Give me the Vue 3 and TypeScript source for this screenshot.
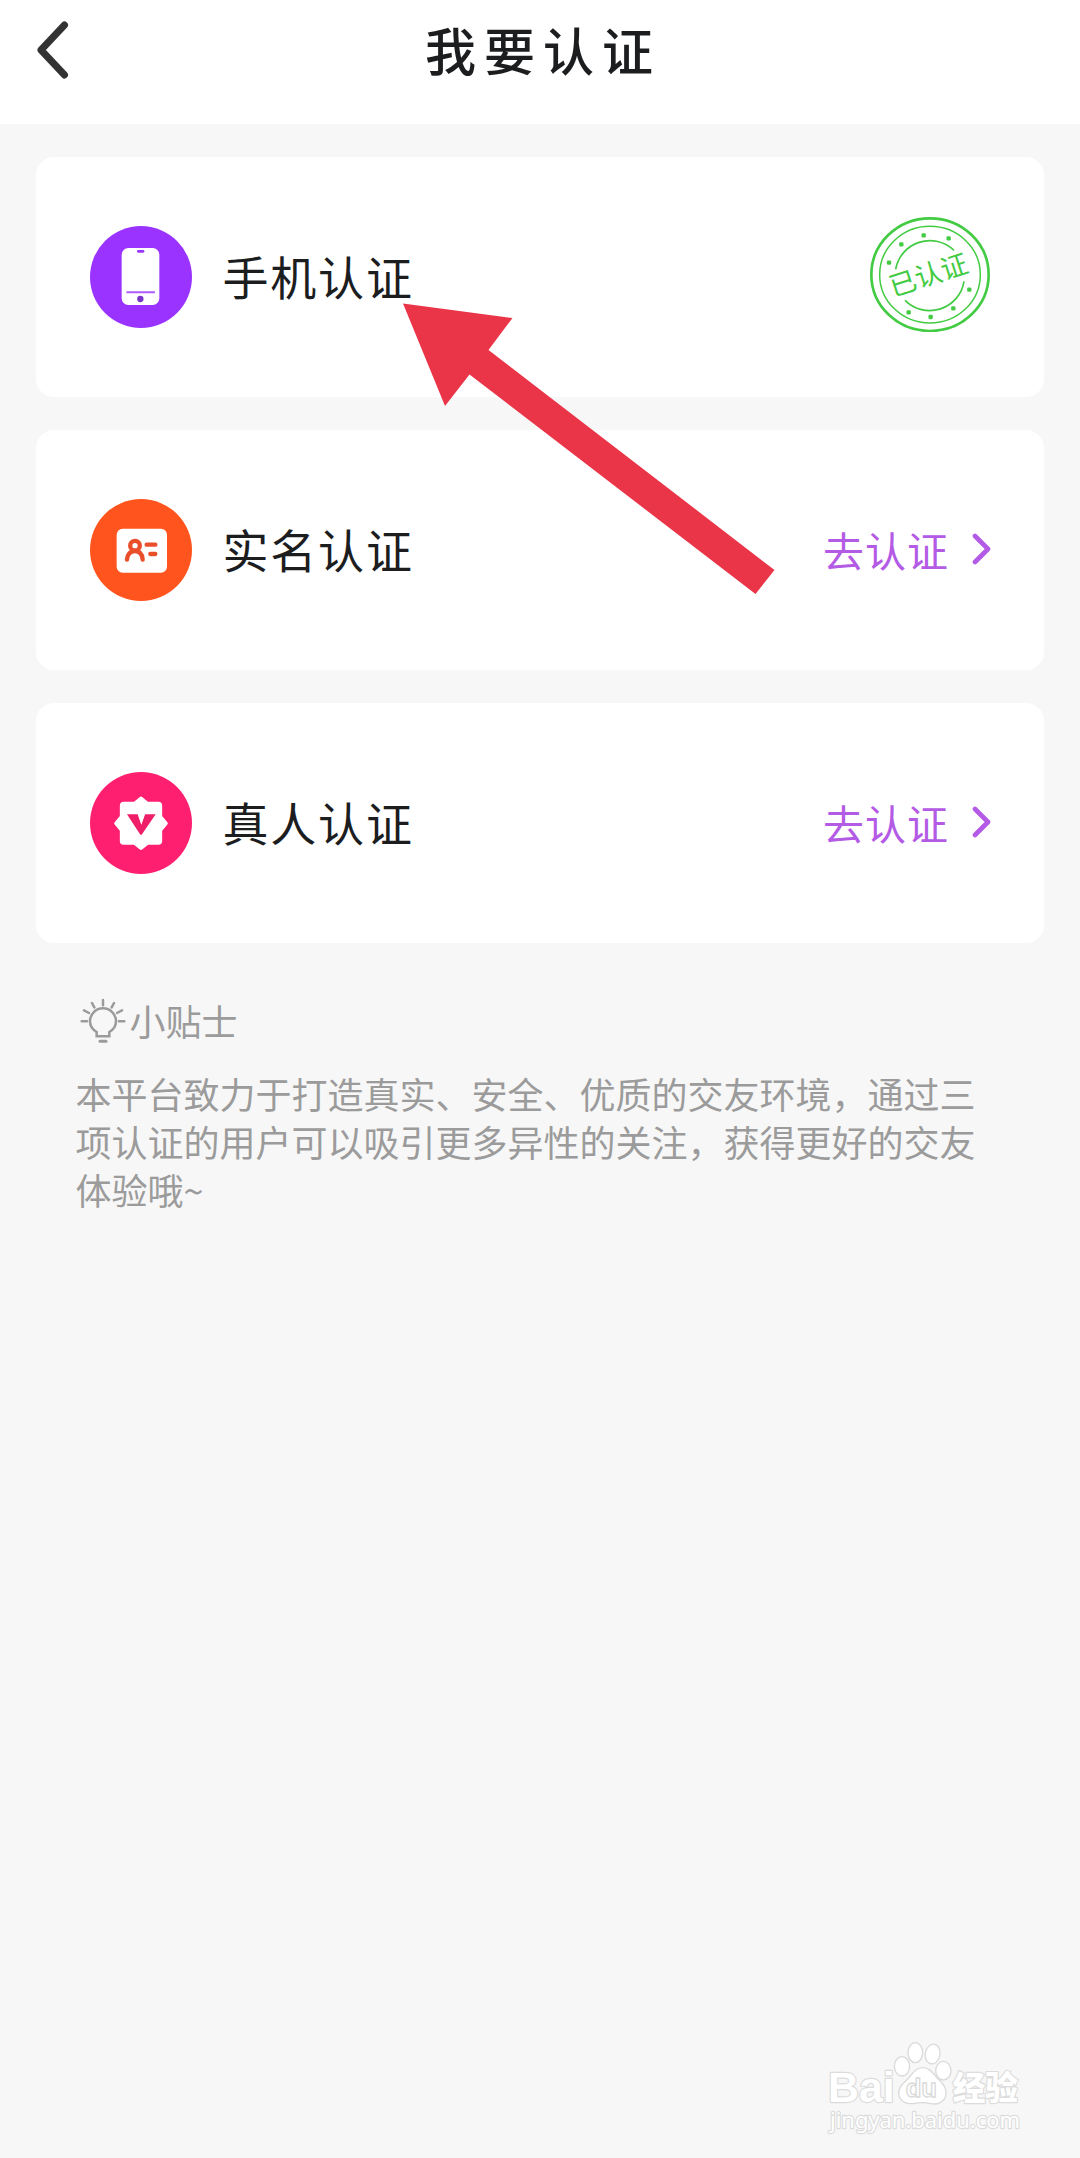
<script setup lang="ts">
interface Item {
  key: 'phone' | 'idcard' | 'person'
  label: string
  color: string
  verified: boolean
}

const items: Item[] = [
  { key: 'phone', label: '手机认证', color: '#9a33ff', verified: true },
  { key: 'idcard', label: '实名认证', color: '#ff541d', verified: false },
  { key: 'person', label: '真人认证', color: '#ff1f70', verified: false },
]

const stampDots = [
  [117, 187], [154, 132], [221, 105], [296, 114],
  [358, 268], [310, 324], [242, 350], [176, 336],
]
</script>

<template>
  <div class="page">
    <header class="bar">
      <svg class="back" width="34" height="60" viewBox="0 0 34 60">
        <path d="M27.5 5 L4 30 L27.5 55" />
      </svg>
      <h1 class="title">我要认证</h1>
    </header>

    <main class="list">
      <section v-for="item in items" :key="item.key" class="card">
        <svg class="badge" viewBox="0 0 306 306">
          <circle cx="153" cy="153" r="153" :fill="item.color" />
          <g v-if="item.key === 'phone'">
            <rect x="95" y="66" width="113" height="171" rx="20" fill="#fff" />
            <rect x="141" y="72" width="22" height="8" rx="4" :fill="item.color" />
            <rect x="109" y="196" width="86" height="6" rx="2" :fill="item.color" opacity="0.8" />
            <circle cx="151" cy="219" r="9.5" fill="#7a35c8" />
          </g>
          <g v-else-if="item.key === 'idcard'">
            <rect x="80" y="89" width="151" height="132" rx="18" fill="#fff" />
            <g fill="none" stroke="#ea4f2c" stroke-width="13" stroke-linecap="round">
              <circle cx="135" cy="140" r="14.5" />
              <path d="M111 182 C112 166 121 156 135 156 C149 156 157 166 158 182" />
              <path d="M170 137 H196 M181 165 H196" />
            </g>
          </g>
          <g v-else>
            <path
              d="M153 79 L172 95 H205 Q211 95 211 101 V134 L228 154 L211 174 V207 Q211 213 205 213 H172 L153 228 L134 213 H101 Q95 213 95 207 V174 L78 154 L95 134 V101 Q95 95 101 95 H134 Z"
              fill="#fff" stroke="#fff" stroke-width="11" stroke-linejoin="round"
            />
            <path d="M111 127 L143 127 L154 158 L165 127 L197 127 L155 188 L151 188 Z" fill="#ef1e69" />
            <path d="M144 125 L165 125 L154 157 Z" fill="#fff" />
          </g>
        </svg>
        <span class="label">{{ item.label }}</span>

        <svg v-if="item.verified" class="stamp" viewBox="60 50 360 346">
          <g fill="none" stroke="#43cb43">
            <ellipse cx="240" cy="223" rx="176" ry="169" stroke-width="8" />
            <ellipse cx="240" cy="223" rx="151" ry="145" stroke-width="4.5" />
            <path d="M137 207 A104 103 0 0 1 312 150" stroke-width="5" />
            <path d="M165 300 A104 103 0 0 0 342 243" stroke-width="5" />
          </g>
          <g fill="#43cb43">
            <rect
              v-for="([x, y], i) in stampDots" :key="i"
              :x="x - 6.5" :y="y - 6.5" width="13" height="13" rx="4"
            />
            <text class="stamp-text" transform="translate(235 223) rotate(-18)" text-anchor="middle" y="30">已认证</text>
          </g>
        </svg>
        <div v-else class="action">
          <span class="action-text">去认证</span>
          <svg class="chevron" width="20" height="34" viewBox="0 0 20 34">
            <path d="M3 4 L16 17 L3 30" />
          </svg>
        </div>
      </section>
    </main>

    <aside class="tips">
      <div class="tips-head">
        <svg class="bulb" width="46" height="46" viewBox="0 0 138 138">
          <g fill="none" stroke="#9b9b9b" stroke-width="7.5" stroke-linecap="round">
            <path d="M50 118 V105 C36 97 30 85 30 73 A39 39 0 0 1 108 73 C108 85 102 97 88 105 V118 Z" />
            <path d="M60 133 H78" stroke-width="9" />
            <path d="M69 9 V25 M36 18 L43 31 M102 18 L95 31 M12 40 L27 48 M126 40 L111 48 M5 73 H21 M117 73 H133" />
          </g>
        </svg>
        <span class="tips-title">小贴士</span>
      </div>
      <p class="tips-body">本平台致力于打造真实、安全、优质的交友环境，通过三项认证的用户可以吸引更多异性的关注，获得更好的交友体验哦~</p>
    </aside>

    <svg class="arrow" width="373" height="292" viewBox="0 0 373 292">
      <path d="M0 -0.5 L109.5 14 L85.5 46 L371.5 266 L352.5 290 L66.5 70.5 L42 102 Z" fill="#ea3548" />
    </svg>

    <svg class="mark" width="260" height="138" viewBox="0 0 780 414">
      <g fill="#fff" stroke="#dcdcdc" stroke-width="7" paint-order="stroke" stroke-linejoin="round">
        <text class="latin" x="84" y="246" font-size="130" textLength="200" lengthAdjust="spacingAndGlyphs">Bai</text>
        <text class="cjk" x="458" y="240" font-size="98" textLength="196" lengthAdjust="spacingAndGlyphs">经验</text>
        <text class="url" x="90" y="325" font-size="66" textLength="570" lengthAdjust="spacingAndGlyphs">jingyan.baidu.com</text>
      </g>
      <g fill="#fff" stroke="#dadada" stroke-width="4">
        <ellipse cx="306" cy="139" rx="23" ry="29" />
        <ellipse cx="346" cy="98" rx="22" ry="30" />
        <ellipse cx="398" cy="102" rx="22" ry="30" transform="rotate(10 398 102)" />
        <ellipse cx="430" cy="152" rx="23" ry="28" />
        <path d="M368 143 C390 143 399 160 412 175 C430 192 441 205 438 224 C434 247 412 255 392 251 C374 247 360 247 344 250 C320 254 299 245 296 222 C294 202 310 190 323 177 C336 163 346 143 368 143 Z" />
        <text class="du" x="317" y="231" font-size="78" textLength="94" lengthAdjust="spacingAndGlyphs">du</text>
      </g>
    </svg>
  </div>
</template>

<style>
body {
  margin: 0;
  background: #f7f7f7;
}
</style>

<style scoped>
.page {
  position: relative;
  width: 1080px;
  height: 2158px;
  overflow: hidden;
  background: #f7f7f7;
  color: #1c1d1f;
  font-family: "Noto Sans CJK SC", sans-serif;
}
.bar {
  display: flex;
  align-items: flex-start;
  height: 124px;
  background: #fff;
}
.back {
  margin: 20px 0 0 37px;
  flex: none;
}
.back path {
  fill: none;
  stroke: #333;
  stroke-width: 7;
  stroke-linecap: round;
  stroke-linejoin: round;
}
.title {
  flex: 1;
  margin: 11px 65px 0 0;
  font-size: 51px;
  line-height: 76px;
  font-weight: 500;
  letter-spacing: 8px;
  text-align: center;
}
.list {
  display: flex;
  flex-direction: column;
  gap: 33px;
  padding: 33px 36px 0;
}
.card {
  display: flex;
  align-items: center;
  box-sizing: border-box;
  height: 240px;
  padding: 0 54px;
  border-radius: 18px;
  background: #fff;
}
.badge {
  width: 102px;
  height: 102px;
  flex: none;
}
.label {
  margin: 0 0 4px 30.5px;
  font-size: 46px;
  line-height: 68px;
  letter-spacing: 1.8px;
}
.stamp {
  width: 120px;
  height: 115.3px;
  margin: -5px 0 0 auto;
}
.stamp-text {
  font-size: 81px;
}
.action {
  display: flex;
  align-items: center;
  margin: 0 -2px 3px auto;
  color: #b45be6;
}
.action-text {
  font-size: 41px;
  line-height: 60px;
  letter-spacing: 1px;
}
.chevron {
  margin-left: 23px;
}
.chevron path {
  fill: none;
  stroke: #b45be6;
  stroke-width: 4.6;
  stroke-linecap: round;
  stroke-linejoin: round;
}
.tips {
  padding: 51px 76px 0 75.5px;
  color: #9b9b9b;
  font-size: 36px;
}
.tips-head {
  display: flex;
  align-items: center;
  height: 52px;
  margin-left: 4px;
}
.bulb {
  margin-right: 4px;
}
.tips-body {
  width: 908px;
  margin: 23px 0 0;
  line-height: 48px;
}
.arrow {
  position: absolute;
  left: 403px;
  top: 304px;
  overflow: visible;
}
.mark {
  position: absolute;
  left: 800px;
  top: 2020px;
}
.latin,
.du {
  font-family: "Liberation Sans", sans-serif;
  font-weight: 700;
}
.cjk {
  font-weight: 900;
}
.url {
  font-family: "Noto Sans", sans-serif;
}
</style>
